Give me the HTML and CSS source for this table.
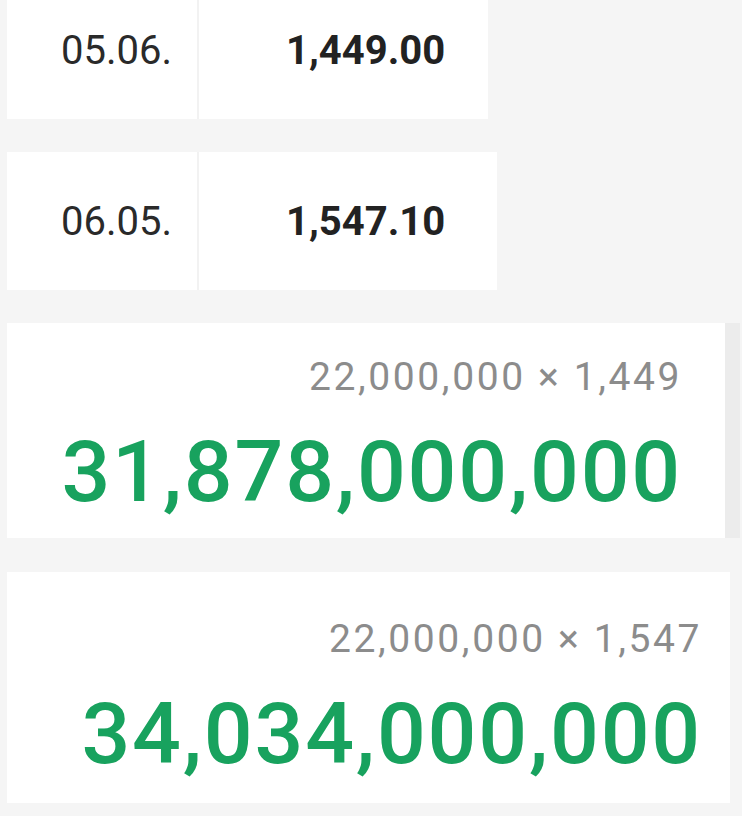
FILE: index.html
```html
<!DOCTYPE html>
<html>
<head>
<meta charset="utf-8">
<link rel="stylesheet" href="styles.css">
</head>
<body>
<div class="list">
  <div class="rate rate--first">
    <div class="rate__date">05.06.</div>
    <div class="rate__value">1,449.00</div>
  </div>
  <div class="rate rate--wide">
    <div class="rate__date">06.05.</div>
    <div class="rate__value">1,547.10</div>
  </div>
  <div class="calc calc--a">
    <div class="calc__formula">22,000,000 × 1,449</div>
    <div class="calc__result">31,878,000,000</div>
  </div>
  <div class="calc calc--b">
    <div class="calc__formula">22,000,000 × 1,547</div>
    <div class="calc__result">34,034,000,000</div>
  </div>
</div>
</body>
</html>
```

FILE: styles.css
```css
html, body {
  margin: 0;
  padding: 0;
  background: #f5f5f5;
  font-family: Roboto, "Liberation Sans", sans-serif;
}
.list {
  display: flex;
  flex-direction: column;
  align-items: flex-start;
  padding-left: 7px;
  gap: 33px;
}
.rate {
  display: flex;
  height: 138px;
  width: 481px;
  background: #fff;
}
.rate--first {
  margin-top: -19px;
}
.rate--wide {
  width: 490px;
}
.rate__date {
  width: 192px;
  box-sizing: border-box;
  padding-left: 54px;
  border-right: 2px solid #f2f2f2;
  display: flex;
  align-items: center;
  font-size: 40px;
  color: #2a2a2a;
}
.rate__value {
  flex: 1;
  padding-left: 87px;
  display: flex;
  align-items: center;
  font-size: 40px;
  font-weight: 700;
  color: #222;
}
.calc {
  display: flex;
  flex-direction: column;
  align-items: flex-end;
  background: #fff;
  box-sizing: border-box;
}
.calc--a {
  width: 733px;
  height: 215px;
  padding: 35px 45px 0 0;
  border-right: 15px solid #ececec;
}
.calc--b {
  width: 723px;
  height: 231px;
  margin-top: 1px;
  padding: 48px 30px 0 0;
}
.calc__formula {
  font-size: 39px;
  letter-spacing: 2.6px;
  margin-right: -2px;
  color: #8c8c8c;
  line-height: 1;
}
.calc__result {
  font-size: 86px;
  font-weight: 500;
  letter-spacing: 1.8px;
  margin-right: -2px;
  color: #18a25e;
  line-height: 1;
  margin-top: 32px;
}
```
